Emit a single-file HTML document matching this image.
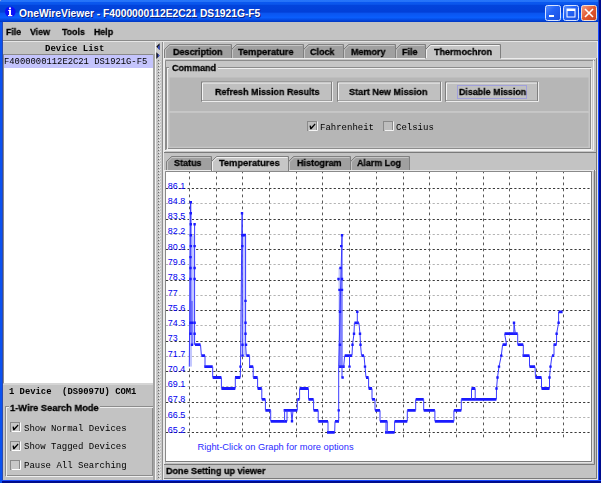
<!DOCTYPE html>
<html><head><meta charset="utf-8">
<style>
*{margin:0;padding:0;box-sizing:border-box}
html,body{width:601px;height:483px;overflow:hidden;background:#fff}
body{position:relative;font-family:"Liberation Sans",sans-serif;color:#000}
.a{position:absolute;white-space:nowrap;will-change:transform}
.sb{font-family:"Liberation Sans",sans-serif;font-weight:bold;font-size:9px;line-height:1;-webkit-text-stroke:0.3px #000}
.mb{font-family:"Liberation Mono",monospace;font-weight:bold;font-size:9px;line-height:1}
.mr{font-family:"Liberation Mono",monospace;font-size:9px;line-height:1}
svg{position:absolute;left:0;top:0}
</style></head><body>
<svg width="601" height="483" viewBox="0 0 601 483" fill="none">
<defs>
<linearGradient id="tg" x1="0" y1="0" x2="0" y2="22" gradientUnits="userSpaceOnUse">
<stop offset="0.0000" stop-color="#0a5cf5"/><stop offset="0.0455" stop-color="#3f8dff"/><stop offset="0.0909" stop-color="#0a58f0"/><stop offset="0.1955" stop-color="#0a56ec"/><stop offset="0.2364" stop-color="#0244dc"/><stop offset="0.5455" stop-color="#0240d8"/><stop offset="0.6136" stop-color="#0a55f0"/><stop offset="0.7955" stop-color="#0a5efc"/><stop offset="0.9091" stop-color="#0448e0"/><stop offset="1.0000" stop-color="#0036c0"/>
</linearGradient>
<linearGradient id="bg1" x1="0" y1="0" x2="1" y2="1">
<stop offset="0" stop-color="#5a90ff"/><stop offset="0.4" stop-color="#2463f6"/><stop offset="1" stop-color="#1a4fe0"/>
</linearGradient>
<linearGradient id="bg2" x1="0" y1="0" x2="1" y2="1">
<stop offset="0" stop-color="#f3a087"/><stop offset="0.5" stop-color="#e2582f"/><stop offset="1" stop-color="#c8401c"/>
</linearGradient>
<radialGradient id="ig" cx="0.4" cy="0.35" r="0.7">
<stop offset="0" stop-color="#6e8cff"/><stop offset="0.6" stop-color="#1a2fe0"/><stop offset="1" stop-color="#0a1a9a"/>
</radialGradient>
<pattern id="bumps" x="156" y="0" width="6" height="3" patternUnits="userSpaceOnUse">
<rect x="0" y="0" width="6" height="3" fill="#c8c8c8"/>
<rect x="2" y="0" width="1" height="1" fill="#6e6e6e"/>
<rect x="3" y="2" width="1" height="1" fill="#eeeeee"/>
<rect x="4" y="1" width="1" height="1" fill="#e4e4e4"/>
<rect x="1" y="1" width="1" height="1" fill="#b4b4b4"/>
</pattern>
</defs>
<!-- window frame -->
<rect x="0" y="0" width="601" height="483" fill="#a8b4e0"/>
<path d="M0 3Q0 0 3 0H598Q601 0 601 3V483H0Z" fill="#0846e0"/>
<path d="M0 3Q0 0 3 0H598Q601 0 601 3V22H0Z" fill="url(#tg)"/>
<rect x="0" y="22" width="2" height="461" fill="#0a52f0"/>
<rect x="2" y="22" width="1" height="458" fill="#2a48b0"/>
<rect x="598" y="22" width="1" height="461" fill="#1848ff"/>
<rect x="599" y="0" width="2" height="483" fill="#000c8c"/>
<rect x="598" y="0" width="1" height="22" fill="#0a40c8"/>
<rect x="0" y="480" width="601" height="1" fill="#1848ff"/>
<rect x="0" y="481" width="601" height="2" fill="#000c8c"/>
<rect x="0" y="480" width="2" height="3" fill="#0a52f0"/>
<!-- icon -->
<circle cx="10.3" cy="11.8" r="5.3" fill="#0a10f8"/>
<rect x="9" y="7.5" width="2" height="1.8" fill="#fff"/>
<rect x="9" y="10" width="2" height="5.5" fill="#fff"/>
<rect x="8.2" y="10" width="1" height="1" fill="#fff"/>
<rect x="8" y="15" width="4.3" height="1.2" fill="#fff"/>
<text x="20" y="17.5" fill="#0a2080" font-family="Liberation Sans" font-weight="bold" font-size="10.25">OneWireViewer - F4000000112E2C21 DS1921G-F5</text>
<text x="19" y="16.8" fill="#fff" font-family="Liberation Sans" font-weight="bold" font-size="10.25">OneWireViewer - F4000000112E2C21 DS1921G-F5</text>
<!-- window buttons -->
<rect x="545.5" y="5.5" width="15" height="15" rx="2" fill="url(#bg1)" stroke="#d8e4ff" stroke-width="1"/>
<rect x="549" y="15" width="5" height="2" fill="#fff"/>
<rect x="563.5" y="5.5" width="15" height="15" rx="2" fill="url(#bg1)" stroke="#d8e4ff" stroke-width="1"/>
<rect x="567" y="9" width="8" height="8" fill="none" stroke="#fff" stroke-width="1"/>
<rect x="567" y="9" width="8" height="2" fill="#fff"/>
<rect x="581.5" y="5.5" width="15" height="15" rx="2" fill="url(#bg2)" stroke="#f0e0d8" stroke-width="1"/>
<path d="M585 9L593 17M593 9L585 17" stroke="#fff" stroke-width="1.6"/>

<!-- client -->
<rect x="3" y="22" width="595" height="458" fill="#c3c3c3"/>
<rect x="3" y="40" width="595" height="1" fill="#8a8a8a"/>
<rect x="3" y="41" width="595" height="1" fill="#e6e6e6"/>

<!-- left panel list -->
<rect x="3" y="54" width="151" height="1" fill="#8a8a8a"/>
<rect x="3" y="54" width="1" height="330" fill="#8a8a8a"/>
<rect x="4" y="55" width="149.5" height="328" fill="#fff"/>
<rect x="153" y="54" width="1" height="330" fill="#9a9a9a"/>
<rect x="3" y="383.5" width="151" height="1" fill="#e8e8e8"/>
<rect x="4" y="55" width="149" height="13" fill="#c4c4fc"/>
<!-- left group box -->
<rect x="5.5" y="406.5" width="147" height="69" fill="none" stroke="#8c8c8c"/>
<rect x="6.5" y="407.5" width="147" height="69" fill="none" stroke="#efefef"/>
<rect x="9" y="402" width="91" height="10" fill="#c3c3c3"/>
<!-- checkboxes left -->
<g id="cbs">
<rect x="10.5" y="422.5" width="9" height="9" fill="#c8c8c8" stroke="#8a8a8a"/>
<path d="M11.5 431.5H20.5V422.5" stroke="#fff" fill="none"/>
<path d="M12.5 426.8 L13.8 426.5 L14.2 428.2 L17.8 424.4 L18.5 425.5 L14.4 430.3 L13.2 430.3Z" fill="#000"/>
<rect x="10.5" y="441.5" width="9" height="9" fill="#c8c8c8" stroke="#8a8a8a"/>
<path d="M11.5 450.5H20.5V441.5" stroke="#fff" fill="none"/>
<path d="M12.5 445.8 L13.8 445.5 L14.2 447.2 L17.8 443.4 L18.5 444.5 L14.4 449.3 L13.2 449.3Z" fill="#000"/>
<rect x="10.5" y="460.5" width="9" height="9" fill="#c8c8c8" stroke="#8a8a8a"/>
<path d="M11.5 469.5H20.5V460.5" stroke="#fff" fill="none"/>
</g>

<!-- splitter -->
<rect x="153" y="54" width="2" height="426" fill="#a4a4a4"/>
<rect x="155" y="42" width="1" height="438" fill="#f6f6f6"/>
<rect x="156" y="42" width="6" height="438" fill="url(#bumps)"/>
<rect x="156" y="42" width="6" height="18" fill="#cdcdcd"/>
<rect x="162" y="42" width="1" height="438" fill="#8e8e8e"/>
<rect x="163" y="42" width="1" height="438" fill="#ececec"/>
<path d="M156.3 46.6L159.6 43.3V49.9Z" fill="#101018"/>
<path d="M158 46.6L159.6 45V49.9L158 48.3Z" fill="#3a50c8"/>
<path d="M159.6 55.6L156.3 52.3V58.9Z" fill="#101018"/>
<path d="M157.8 53.8L159.6 55.6L157.8 57.4Z" fill="#3a50c8"/>

<!-- top tabs -->
<g stroke-width="1">
<path d="M164.5 58V49.5L169.5 44.5H231.5V58" fill="#a0a0a0" stroke="#7f7f7f"/>
<path d="M165.5 58V49.9L169.9 45.5H230.5" fill="none" stroke="#c6c6c6"/>
<path d="M231.5 58V49.5L236.5 44.5H303.5V58" fill="#a0a0a0" stroke="#7f7f7f"/>
<path d="M232.5 58V49.9L236.9 45.5H302.5" fill="none" stroke="#c6c6c6"/>
<path d="M303.5 58V49.5L308.5 44.5H343.5V58" fill="#a0a0a0" stroke="#7f7f7f"/>
<path d="M304.5 58V49.9L308.9 45.5H342.5" fill="none" stroke="#c6c6c6"/>
<path d="M343.5 58V49.5L348.5 44.5H395.5V58" fill="#a0a0a0" stroke="#7f7f7f"/>
<path d="M344.5 58V49.9L348.9 45.5H394.5" fill="none" stroke="#c6c6c6"/>
<path d="M395.5 58V49.5L400.5 44.5H425.5V58" fill="#a0a0a0" stroke="#7f7f7f"/>
<path d="M396.5 58V49.9L400.9 45.5H424.5" fill="none" stroke="#c6c6c6"/>
<path d="M425.5 60V49.5L430.5 44.5H500.5V60" fill="#c6c6c6" stroke="#7f7f7f"/>
<path d="M426.5 60V49.9L430.9 45.5H499.5" fill="none" stroke="#f2f2f2"/>
</g>
<!-- top content border -->
<path d="M164 58.5H425.5M500.5 58.5H597" stroke="#ececec"/>
<rect x="164" y="59" width="432" height="93" fill="#c6c6c6"/>
<path d="M164.5 59V152" stroke="#ececec"/>
<path d="M596.5 58V152.5H164" stroke="#7a7a7a"/>
<path d="M426 59H500" stroke="#c6c6c6" stroke-width="2"/>
<!-- inner etched -->
<path d="M165.5 151V60.5H595" stroke="#8c8c8c"/>
<path d="M593.5 60V150.5H165" stroke="#f0f0f0"/>
<!-- command group -->
<rect x="166.5" y="67.5" width="424" height="81" fill="none" stroke="#8c8c8c"/>
<rect x="167.5" y="68.5" width="424" height="81" fill="none" stroke="#f0f0f0"/>
<rect x="169" y="63" width="49" height="9" fill="#c6c6c6"/>
<rect x="169.5" y="77.5" width="419" height="34" fill="#b6b6b6"/>
<rect x="169.5" y="111.5" width="419" height="1.2" fill="#cfcfcf"/>
<rect x="169.5" y="112.7" width="419" height="34" fill="#b6b6b6"/>

<!-- buttons -->
<g>
<rect x="201.5" y="82" width="130" height="19" fill="#c0c0c0" stroke="#808080"/>
<path d="M202.5 100V83H331" stroke="#f4f4f4"/>
<path d="M332.5 82V101.5H202" stroke="#ececec"/>
<rect x="337.5" y="82" width="103" height="19" fill="#c0c0c0" stroke="#808080"/>
<path d="M338.5 100V83H440" stroke="#f4f4f4"/>
<path d="M441.5 82V101.5H338" stroke="#ececec"/>
<rect x="445.5" y="82" width="92" height="19" fill="#c0c0c0" stroke="#808080"/>
<path d="M446.5 100V83H537" stroke="#f4f4f4"/>
<path d="M538.5 82V101.5H446" stroke="#ececec"/>
<rect x="457.5" y="85.5" width="69" height="13" fill="none" stroke="#a0a0dc"/>
</g>
<!-- checkboxes command -->
<rect x="307.5" y="121.5" width="9" height="9" fill="#bebebe" stroke="#8a8a8a"/>
<path d="M308.5 130.5H317.5V121.5" stroke="#f4f4f4" fill="none"/>
<path d="M309.5 125.8 L310.8 125.5 L311.2 127.2 L314.8 123.4 L315.5 124.5 L311.4 129.3 L310.2 129.3Z" fill="#000"/>
<rect x="383.5" y="121.5" width="9" height="9" fill="#bebebe" stroke="#8a8a8a"/>
<path d="M384.5 130.5H393.5V121.5" stroke="#f4f4f4" fill="none"/>

<!-- lower tabs -->
<g stroke-width="1">
<path d="M166.5 170V161.5L171.5 156.5H211.5V170" fill="#a0a0a0" stroke="#7f7f7f"/>
<path d="M167.5 170V161.9L171.9 157.5H210.5" fill="none" stroke="#c6c6c6"/>
<path d="M288.5 170V161.5L293.5 156.5H350.5V170" fill="#a0a0a0" stroke="#7f7f7f"/>
<path d="M289.5 170V161.9L293.9 157.5H349.5" fill="none" stroke="#c6c6c6"/>
<path d="M350.5 170V161.5L355.5 156.5H409.5V170" fill="#a0a0a0" stroke="#7f7f7f"/>
<path d="M351.5 170V161.9L355.9 157.5H408.5" fill="none" stroke="#c6c6c6"/>
<path d="M211.5 171V161.5L216.5 156.5H288.5V171" fill="#c6c6c6" stroke="#7f7f7f"/>
<path d="M212.5 171V161.9L216.9 157.5H287.5" fill="none" stroke="#f2f2f2"/>
</g>
<path d="M164 170.5H211M289 170.5H597" stroke="#ececec"/>
<path d="M164.5 170V464" stroke="#ececec"/>
<path d="M594.5 170V464.5H164" stroke="#7a7a7a"/>
<!-- chart frame -->
<path d="M165.5 462V171.5H592" stroke="#8a8a8a"/>
<rect x="166" y="172" width="425" height="289" fill="#fff"/>
<path d="M591.5 172V461.5H166" stroke="#7e7e7e"/>
<path d="M592.5 172V462.5H166" stroke="#e4e4e4"/>
<path d="M596.5 58V478.5H164" stroke="#7a7a7a"/>
<path d="M597.5 41V479.5H164" stroke="#e6e6e6"/>

<!-- chart -->
<g font-family="Liberation Sans" font-size="9.7" fill="#0000f0">
<path d="M166 188.5H591M166 219.5H591M166 249.5H591M166 280.5H591M166 310.5H591M166 341.5H591M166 371.5H591M166 402.5H591M166 432.5H591" stroke="#3a3a3a" stroke-width="1" stroke-dasharray="2.2 2.1" fill="none"/>
<path d="M166 203.5H591M166 234.5H591M166 264.5H591M166 295.5H591M166 325.5H591M166 356.5H591M166 386.5H591M166 417.5H591" stroke="#b4b4b4" stroke-width="1" stroke-dasharray="2.2 2.1" fill="none"/>
<path d="M189.5 172V437.5M216.5 172V437.5M242.5 172V437.5M269.5 172V437.5M296.5 172V437.5M322.5 172V437.5M349.5 172V437.5M376.5 172V437.5M403.5 172V437.5M429.5 172V437.5M456.5 172V437.5M483.5 172V437.5M509.5 172V437.5M536.5 172V437.5M563.5 172V437.5" stroke="#585858" stroke-width="1" stroke-dasharray="2.8 3.2" stroke-dashoffset="1.5" fill="none"/>
<text x="167.8" y="188.6" textLength="17.4" lengthAdjust="spacingAndGlyphs">86.1</text>
<text x="167.8" y="203.9" textLength="17.4" lengthAdjust="spacingAndGlyphs">84.8</text>
<text x="167.8" y="219.1" textLength="17.4" lengthAdjust="spacingAndGlyphs">83.5</text>
<text x="167.8" y="234.4" textLength="17.4" lengthAdjust="spacingAndGlyphs">82.2</text>
<text x="167.8" y="249.7" textLength="17.4" lengthAdjust="spacingAndGlyphs">80.9</text>
<text x="167.8" y="264.9" textLength="17.4" lengthAdjust="spacingAndGlyphs">79.6</text>
<text x="167.8" y="280.2" textLength="17.4" lengthAdjust="spacingAndGlyphs">78.3</text>
<text x="167.8" y="295.5" textLength="9.8" lengthAdjust="spacingAndGlyphs">77</text>
<text x="167.8" y="310.8" textLength="17.4" lengthAdjust="spacingAndGlyphs">75.6</text>
<text x="167.8" y="326.0" textLength="17.4" lengthAdjust="spacingAndGlyphs">74.3</text>
<text x="167.8" y="341.3" textLength="9.8" lengthAdjust="spacingAndGlyphs">73</text>
<text x="167.8" y="356.6" textLength="17.4" lengthAdjust="spacingAndGlyphs">71.7</text>
<text x="167.8" y="371.8" textLength="17.4" lengthAdjust="spacingAndGlyphs">70.4</text>
<text x="167.8" y="387.1" textLength="17.4" lengthAdjust="spacingAndGlyphs">69.1</text>
<text x="167.8" y="402.4" textLength="17.4" lengthAdjust="spacingAndGlyphs">67.8</text>
<text x="167.8" y="417.7" textLength="17.4" lengthAdjust="spacingAndGlyphs">66.5</text>
<text x="167.8" y="432.9" textLength="17.4" lengthAdjust="spacingAndGlyphs">65.2</text>
</g>
<g>
<rect x="189.0" y="213.3" width="3.0" height="153.3" fill="#c4c8ff"/>
<rect x="192.0" y="235.2" width="2.6" height="109.5" fill="#c4c8ff"/>
<rect x="242.3" y="235.2" width="3.4" height="120.5" fill="#c4c8ff"/>
<rect x="338.5" y="268.0" width="3.6" height="98.6" fill="#c4c8ff"/>
<path d="M242.0 235.2H246.0M195.0 344.7H200.5M201.4 355.6H205.0M204.3 366.6H212.7M212.7 377.5H221.4M221.4 388.5H235.3M235.0 377.5H240.3M246.3 355.6H249.6M249.0 366.6H253.2M253.2 377.5H257.6M257.6 388.5H261.8M261.8 399.4H265.4M265.4 410.4H270.7M270.7 421.3H287.0M283.6 410.4H297.3M297.3 399.4H299.6M299.6 388.5H308.5M308.5 399.4H313.6M313.6 410.4H318.2M318.2 421.3H328.0M327.0 432.3H334.7M335.0 421.3H339.0M338.7 366.6H344.7M344.7 355.6H352.0M354.4 322.8H358.9M361.5 355.6H364.0M366.0 377.5H368.6M368.6 388.5H372.0M372.0 399.4H375.0M375.0 410.4H380.0M380.0 421.3H387.3M385.0 432.3H394.6M394.6 421.3H407.3M407.3 410.4H415.7M415.7 399.4H423.7M423.7 410.4H434.9M434.9 421.3H453.9M453.9 410.4H461.3M461.3 399.4H496.4M471.5 388.5H475.2M502.6 344.7H506.6M504.6 333.7H517.7M517.7 344.7H523.3M522.5 355.6H529.5M529.5 366.6H535.0M535.5 377.5H541.5M541.5 388.5H549.5M552.0 355.6H554.0M553.5 344.7H556.5M558.6 311.8H562.6" stroke="#1a1aff" stroke-width="2.8" fill="none"/>
<path d="M189.3 366.6 L190.5 202.3M190.8 202.3 L190.8 333.7M192.0 300.9 L192.0 344.7M194.6 224.2 L194.6 344.7 L195.0 344.7M200.5 344.7 L201.4 355.6M205.0 355.6 L205.0 366.6M212.7 366.6 L212.7 377.5M221.4 377.5 L221.4 388.5M235.3 388.5 L235.3 377.5M240.3 377.5 L240.5 366.6 L241.8 235.2 L242.0 213.3M242.3 213.3 L242.3 355.6M245.6 235.2 L245.6 344.7 L246.3 355.6M249.6 355.6 L249.6 366.6M253.2 366.6 L253.2 377.5M257.6 377.5 L257.6 388.5M261.8 388.5 L261.8 399.4M265.4 399.4 L265.4 410.4M270.7 410.4 L270.7 421.3M284.6 410.4 L284.6 421.3M287.0 410.4 L287.0 421.3M291.0 410.4 L292.0 421.3 L293.0 410.4M297.3 410.4 L297.3 399.4M299.6 399.4 L299.6 388.5M308.5 388.5 L308.5 399.4M313.6 399.4 L313.6 410.4M318.2 410.4 L318.2 421.3M328.0 421.3 L328.0 432.3M334.7 432.3 L335.0 421.3M338.7 421.3 L338.7 366.6 L342.0 235.2M342.0 235.2 L342.0 377.5M340.0 289.9 L340.0 366.6M343.7 366.6 L344.7 355.6M349.5 355.6 L349.5 366.6M352.0 355.6 L352.5 344.7 L354.0 333.7 L354.4 322.8M357.3 311.8 L357.3 322.8M358.9 322.8 L360.0 333.7 L360.5 344.7 L361.5 355.6M364.0 355.6 L365.0 366.6 L366.0 377.5M368.6 377.5 L368.6 388.5M372.0 388.5 L372.0 399.4M375.0 399.4 L375.0 410.4M380.0 410.4 L380.0 421.3M386.0 421.3 L386.0 432.3M387.3 421.3 L387.3 432.3M394.6 432.3 L394.6 421.3M407.3 421.3 L407.3 410.4M415.7 410.4 L415.7 399.4M423.7 399.4 L423.7 410.4M434.9 410.4 L434.9 421.3M453.9 421.3 L453.9 410.4M461.3 410.4 L461.3 399.4M471.5 399.4 L471.5 388.5M475.2 388.5 L475.2 399.4M496.4 399.4 L496.5 388.5 L497.5 377.5 L499.0 366.6 L501.3 355.6 L502.6 344.7M506.6 344.7 L504.6 333.7M513.8 333.7 L514.0 322.8 L515.3 333.7M517.7 333.7 L517.7 344.7M523.3 344.7 L523.3 355.6M529.5 355.6 L529.5 366.6M535.0 366.6 L535.5 377.5M541.5 377.5 L541.5 388.5M549.5 388.5 L549.5 377.5 L550.5 366.6 L552.0 355.6M554.0 355.6 L554.0 344.7M556.5 344.7 L556.6 333.7 L558.6 322.8 L558.6 311.8" stroke="#3a3aff" stroke-width="1" fill="none"/>
<path d="M189.6 201.1h2.4v2.4h-2.4zM189.6 212.1h2.4v2.4h-2.4zM189.6 223.0h2.4v2.4h-2.4zM189.6 234.0h2.4v2.4h-2.4zM189.6 244.9h2.4v2.4h-2.4zM189.3 255.9h2.4v2.4h-2.4zM189.3 266.8h2.4v2.4h-2.4zM189.3 277.8h2.4v2.4h-2.4zM189.3 321.6h2.4v2.4h-2.4zM189.3 332.5h2.4v2.4h-2.4zM193.4 223.0h2.4v2.4h-2.4zM193.4 244.9h2.4v2.4h-2.4zM193.4 266.8h2.4v2.4h-2.4zM193.4 277.8h2.4v2.4h-2.4zM193.4 321.6h2.4v2.4h-2.4zM193.4 332.5h2.4v2.4h-2.4zM190.8 321.6h2.4v2.4h-2.4zM190.8 343.5h2.4v2.4h-2.4zM239.3 365.4h2.4v2.4h-2.4zM240.8 212.1h2.4v2.4h-2.4zM241.1 234.0h2.4v2.4h-2.4zM241.1 244.9h2.4v2.4h-2.4zM244.3 299.7h2.4v2.4h-2.4zM244.3 321.6h2.4v2.4h-2.4zM244.3 332.5h2.4v2.4h-2.4zM241.3 343.5h2.4v2.4h-2.4zM244.8 343.5h2.4v2.4h-2.4zM241.3 354.4h2.4v2.4h-2.4zM340.8 234.0h2.4v2.4h-2.4zM340.0 244.9h2.4v2.4h-2.4zM339.3 266.8h2.4v2.4h-2.4zM337.3 277.8h2.4v2.4h-2.4zM340.8 277.8h2.4v2.4h-2.4zM338.3 288.7h2.4v2.4h-2.4zM340.8 288.7h2.4v2.4h-2.4zM338.8 310.6h2.4v2.4h-2.4zM338.8 343.5h2.4v2.4h-2.4zM341.4 376.3h2.4v2.4h-2.4zM337.5 409.2h2.4v2.4h-2.4zM348.3 365.4h2.4v2.4h-2.4zM351.3 343.5h2.4v2.4h-2.4zM352.8 332.5h2.4v2.4h-2.4zM358.8 332.5h2.4v2.4h-2.4zM359.3 343.5h2.4v2.4h-2.4zM363.8 365.4h2.4v2.4h-2.4zM290.8 420.1h2.4v2.4h-2.4zM356.1 310.6h2.4v2.4h-2.4zM495.3 387.3h2.4v2.4h-2.4zM496.3 376.3h2.4v2.4h-2.4zM497.8 365.4h2.4v2.4h-2.4zM500.1 354.4h2.4v2.4h-2.4zM512.8 321.6h2.4v2.4h-2.4zM548.3 376.3h2.4v2.4h-2.4zM549.3 365.4h2.4v2.4h-2.4zM555.4 332.5h2.4v2.4h-2.4zM557.4 321.6h2.4v2.4h-2.4z" fill="#1a1aff"/>
</g>
<text x="197.5" y="449.5" font-family="Liberation Sans" font-size="9.3" fill="#2a2aff">Right-Click on Graph for more options</text>
</svg>

<!-- text overlays -->
<div class="a sb" style="left:6px;top:27.2px;font-size:9.42px;transform:scaleX(0.9346);transform-origin:0 0">File</div>
<div class="a sb" style="left:30px;top:27.2px;font-size:9.42px;transform:scaleX(0.9346);transform-origin:0 0">View</div>
<div class="a sb" style="left:62px;top:27.2px;font-size:9.42px;transform:scaleX(0.9346);transform-origin:0 0">Tools</div>
<div class="a sb" style="left:94px;top:27.2px;font-size:9.42px;transform:scaleX(0.9346);transform-origin:0 0">Help</div>

<div class="a mb" style="left:44.5px;top:45px">Device List</div>
<div class="a mr" style="left:4px;top:57.5px;font-size:8.85px">F4000000112E2C21 DS1921G-F5</div>
<div class="a mb" style="left:9px;top:388px;white-space:pre;font-size:8.85px">1 Device  (DS9097U) COM1</div>
<div class="a sb" style="left:9.5px;top:402.5px;font-size:9.95px;transform:scaleX(0.9346);transform-origin:0 0">1-Wire Search Mode</div>
<div class="a mr" style="left:23.8px;top:424.7px">Show Normal Devices</div>
<div class="a mr" style="left:23.8px;top:443.2px">Show Tagged Devices</div>
<div class="a mr" style="left:23.8px;top:462.2px">Pause All Searching</div>

<div class="a sb" style="left:172.5px;top:47.2px;font-size:9.63px;transform:scaleX(0.9346);transform-origin:0 0">Description</div>
<div class="a sb" style="left:237.5px;top:47.2px;font-size:9.95px;transform:scaleX(0.9346);transform-origin:0 0">Temperature</div>
<div class="a sb" style="left:310px;top:47.2px;font-size:9.63px;transform:scaleX(0.9346);transform-origin:0 0">Clock</div>
<div class="a sb" style="left:351px;top:47.2px;font-size:9.63px;transform:scaleX(0.9346);transform-origin:0 0">Memory</div>
<div class="a sb" style="left:402px;top:47.2px;font-size:9.63px;transform:scaleX(0.9346);transform-origin:0 0">File</div>
<div class="a sb" style="left:433.5px;top:47.2px;font-size:9.63px;transform:scaleX(0.9346);transform-origin:0 0">Thermochron</div>

<div class="a sb" style="left:171.5px;top:63.2px;font-size:9.63px;transform:scaleX(0.9346);transform-origin:0 0">Command</div>
<div class="a sb" style="left:214.5px;top:87.2px;font-size:9.63px;transform:scaleX(0.9346);transform-origin:0 0">Refresh Mission Results</div>
<div class="a sb" style="left:349px;top:87.2px;font-size:9.74px;transform:scaleX(0.9346);transform-origin:0 0">Start New Mission</div>
<div class="a sb" style="left:458.5px;top:87.2px;font-size:9.52px;transform:scaleX(0.9346);transform-origin:0 0">Disable Mission</div>
<div class="a mr" style="left:320px;top:124.3px">Fahrenheit</div>
<div class="a mr" style="left:396px;top:124.3px">Celsius</div>

<div class="a sb" style="left:174px;top:158.2px;font-size:9.63px;transform:scaleX(0.9346);transform-origin:0 0">Status</div>
<div class="a sb" style="left:218.5px;top:158.2px;font-size:9.95px;transform:scaleX(0.9346);transform-origin:0 0">Temperatures</div>
<div class="a sb" style="left:296.5px;top:158.2px;font-size:9.63px;transform:scaleX(0.9346);transform-origin:0 0">Histogram</div>
<div class="a sb" style="left:357px;top:158.2px;font-size:9.52px;transform:scaleX(0.9346);transform-origin:0 0">Alarm Log</div>

<div class="a sb" style="left:166px;top:466.2px;font-size:9.63px;transform:scaleX(0.9346);transform-origin:0 0">Done Setting up viewer</div>
</body></html>
